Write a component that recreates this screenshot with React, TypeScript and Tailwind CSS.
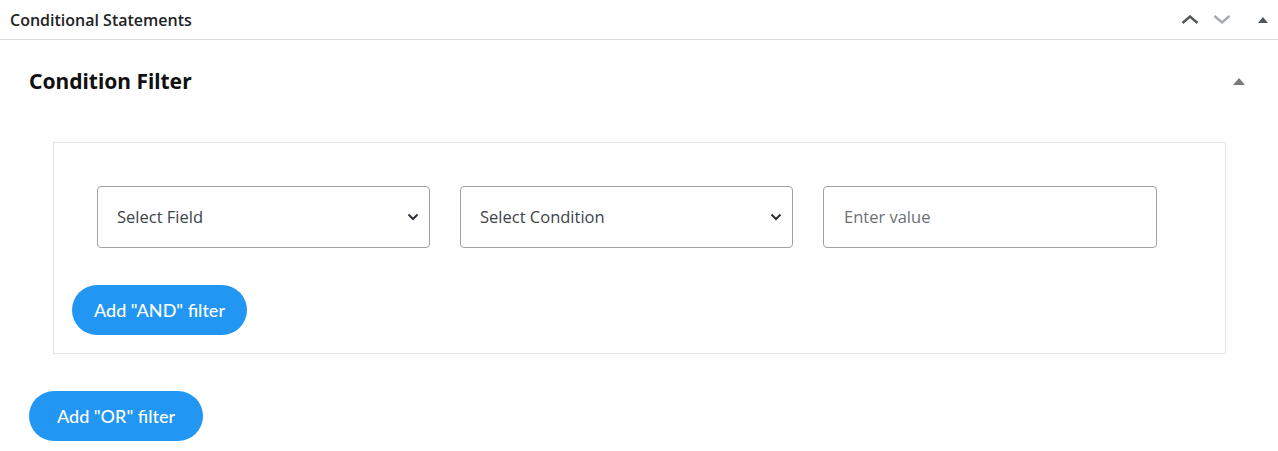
import React from 'react';

const Chevron = ({ className }: { className?: string }) => (
  <svg viewBox="0 0 12 8" className={className} fill="none" stroke="currentColor" strokeWidth={2}>
    <path d="M1.5 1.5 6 6l4.5-4.5" />
  </svg>
);

const SelectBox = ({ label }: { label: string }) => (
  <div className="flex h-[62px] w-[333px] items-center justify-between rounded-[4px] border border-[#9ea3a8] bg-white pl-[19px] pr-[10px] text-[16.5px] text-[#3c434a]">
    <span>{label}</span>
    <Chevron className="h-[8px] w-[12px] text-[#2c3338]" />
  </div>
);

export default function App() {
  return (
    <div className="min-h-screen bg-white" style={{ fontFamily: '"Open Sans", "Noto Sans", sans-serif' }}>
      <div className="flex h-[40px] items-center justify-between border-b border-[#dcdcde] pl-[10px] pr-[10px]">
        <h2 className="text-[16px] font-semibold text-[#1d2327]">Conditional Statements</h2>
        <div className="flex items-center text-[#50575e]">
          <svg viewBox="0 0 18 9" className="h-[9px] w-[18px]" fill="none" stroke="currentColor" strokeWidth={2.4}>
            <path d="M1.5 8 9 1.5 16.5 8" />
          </svg>
          <svg viewBox="0 0 18 9" className="ml-[14px] h-[9px] w-[18px] text-[#a7aaad]" fill="none" stroke="currentColor" strokeWidth={2.4}>
            <path d="M1.5 1 9 7.5 16.5 1" />
          </svg>
          <svg viewBox="0 0 10 6" className="ml-[27px] h-[6px] w-[10px]" fill="currentColor">
            <path d="M5 0 10 6H0z" />
          </svg>
        </div>
      </div>

      <div className="pl-[29px] pr-[33px]">
        <div className="flex h-[82px] items-center justify-between pt-[1px]">
          <h3 className="text-[21px] font-bold text-[#111]" style={{ fontFamily: '"Noto Sans", sans-serif' }}>
            Condition Filter
          </h3>
          <svg viewBox="0 0 12 7" className="h-[7px] w-[12px] text-[#7a7a7a]" fill="currentColor">
            <path d="M6 0 12 7H0z" />
          </svg>
        </div>

        <div className="mt-[20px] ml-[24px] mr-[19px] border border-[#e4e4e4] pb-[18px] pl-[18px] pt-[43px]">
          <div className="ml-[25px] flex gap-[30px]">
            <SelectBox label="Select Field" />
            <SelectBox label="Select Condition" />
            <div className="flex h-[62px] w-[334px] items-center rounded-[4px] border border-[#9ea3a8] bg-white pl-[20px] text-[16.5px] text-[#6b7177]">
              Enter value
            </div>
          </div>
          <button
            className="mt-[37px] flex h-[50px] w-[175px] items-center justify-center rounded-full bg-[#2196f3] text-[18px] font-medium text-white"
            style={{ fontFamily: 'Lato, sans-serif' }}
          >
            Add "AND" filter
          </button>
        </div>

        <button
          className="mt-[37px] flex h-[50px] w-[174px] items-center justify-center rounded-full bg-[#2196f3] text-[18px] font-medium text-white"
          style={{ fontFamily: 'Lato, sans-serif' }}
        >
          Add "OR" filter
        </button>
      </div>
    </div>
  );
}
